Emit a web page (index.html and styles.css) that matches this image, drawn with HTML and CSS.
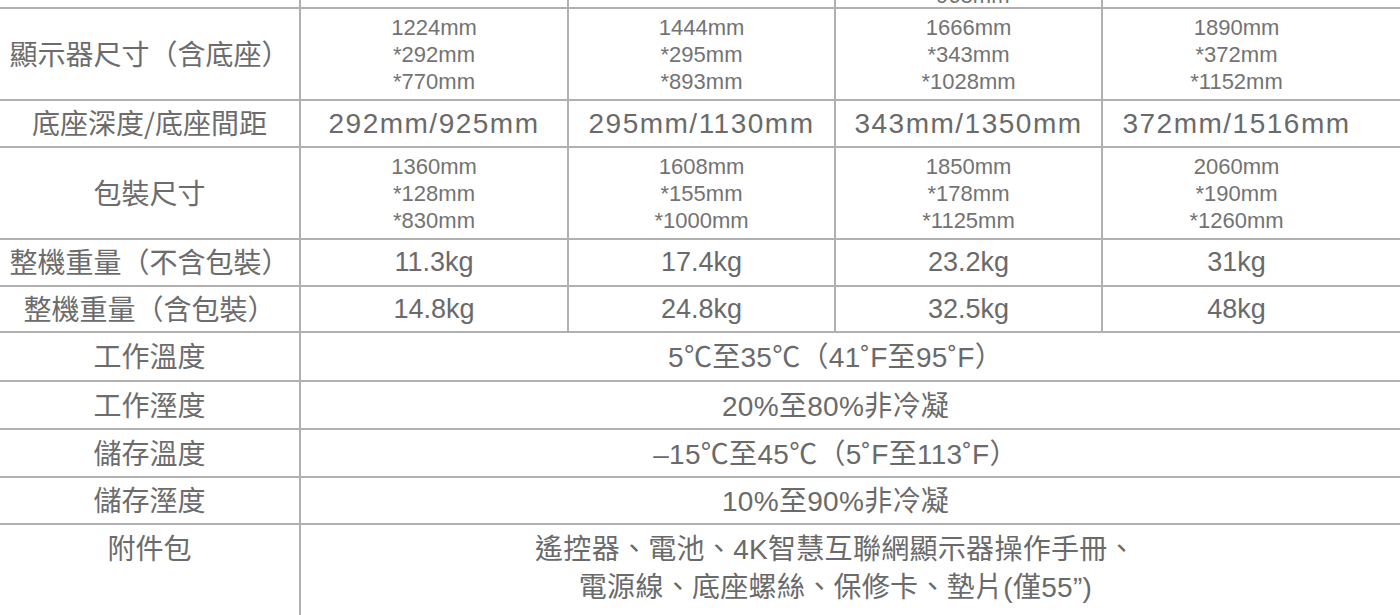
FILE: index.html
```html
<!DOCTYPE html>
<html lang="zh-Hant">
<head>
<meta charset="utf-8">
<title>規格表</title>
<link rel="stylesheet" href="styles.css">
</head>
<body>
<div class="spec">
  <div class="cell cut"></div>
  <div class="cell cut"></div>
  <div class="cell cut"></div>
  <div class="cell cut"><span class="cut-text">*968mm</span></div>
  <div class="cell cut last"></div>

  <div class="cell label">顯示器尺寸（含底座）</div>
  <div class="cell small"><span>1224mm</span><span>*292mm</span><span>*770mm</span></div>
  <div class="cell small"><span>1444mm</span><span>*295mm</span><span>*893mm</span></div>
  <div class="cell small"><span>1666mm</span><span>*343mm</span><span>*1028mm</span></div>
  <div class="cell small last"><span>1890mm</span><span>*372mm</span><span>*1152mm</span></div>

  <div class="cell label">底座深度/底座間距</div>
  <div class="cell big">292mm/925mm</div>
  <div class="cell big">295mm/1130mm</div>
  <div class="cell big">343mm/1350mm</div>
  <div class="cell big last">372mm/1516mm</div>

  <div class="cell label">包裝尺寸</div>
  <div class="cell small"><span>1360mm</span><span>*128mm</span><span>*830mm</span></div>
  <div class="cell small"><span>1608mm</span><span>*155mm</span><span>*1000mm</span></div>
  <div class="cell small"><span>1850mm</span><span>*178mm</span><span>*1125mm</span></div>
  <div class="cell small last"><span>2060mm</span><span>*190mm</span><span>*1260mm</span></div>

  <div class="cell label">整機重量（不含包裝）</div>
  <div class="cell weight">11.3kg</div>
  <div class="cell weight">17.4kg</div>
  <div class="cell weight">23.2kg</div>
  <div class="cell weight last">31kg</div>

  <div class="cell label">整機重量（含包裝）</div>
  <div class="cell weight">14.8kg</div>
  <div class="cell weight">24.8kg</div>
  <div class="cell weight">32.5kg</div>
  <div class="cell weight last">48kg</div>

  <div class="cell label">工作溫度</div>
  <div class="cell wide">5℃至35℃（41˚F至95˚F）</div>

  <div class="cell label">工作溼度</div>
  <div class="cell wide">20%至80%非冷凝</div>

  <div class="cell label">儲存溫度</div>
  <div class="cell wide">–15℃至45℃（5˚F至113˚F）</div>

  <div class="cell label">儲存溼度</div>
  <div class="cell wide">10%至90%非冷凝</div>

  <div class="cell label top">附件包</div>
  <div class="cell wide multi"><span>遙控器、電池、4K智慧互聯網顯示器操作手冊、</span><span>電源線、底座螺絲、保修卡、墊片(僅55”)</span></div>
</div>
</body>
</html>
```

FILE: styles.css
```css
html, body {
  margin: 0;
  padding: 0;
  background: #ffffff;
  overflow: hidden;
}

body {
  font-family: "Liberation Sans", "Noto Sans CJK TC", sans-serif;
  color: #6a6a6a;
}

.spec {
  display: grid;
  width: 1400px;
  grid-template-columns: 299px 266px 265px 265px 1fr;
  grid-template-rows: 7px 90px 45px 90px 45px 44px 47px 46px 46px 45px 100px;
  gap: 2px;
  background: #b0b0b0;
}

.cell {
  background: #ffffff;
  display: flex;
  flex-direction: column;
  align-items: center;
  justify-content: center;
  text-align: center;
  overflow: hidden;
  white-space: nowrap;
}

.last {
  padding-right: 30px;
}

.cut {
  justify-content: flex-start;
}

.cut-text {
  font-size: 22px;
  line-height: 27px;
  margin-top: -18px;
  color: #737373;
}

.label {
  font-size: 28px;
  font-family: "Noto Sans CJK TC", "Liberation Sans", sans-serif;
  color: #6c6c6c;
  padding-bottom: 3px;
}

.label.top {
  justify-content: flex-start;
  padding-top: 3px;
  padding-bottom: 0;
  line-height: 38px;
}

.small {
  font-size: 22px;
  line-height: 27px;
  color: #737373;
}

.big {
  font-size: 28px;
  letter-spacing: 1.5px;
}

.weight {
  font-size: 27px;
}

.wide {
  grid-column: 2 / 6;
  font-size: 28px;
  letter-spacing: 0.3px;
  padding-right: 30px;
  padding-bottom: 3px;
}

.wide.multi {
  justify-content: flex-start;
  padding-top: 6px;
  padding-bottom: 0;
  line-height: 38px;
}
```
